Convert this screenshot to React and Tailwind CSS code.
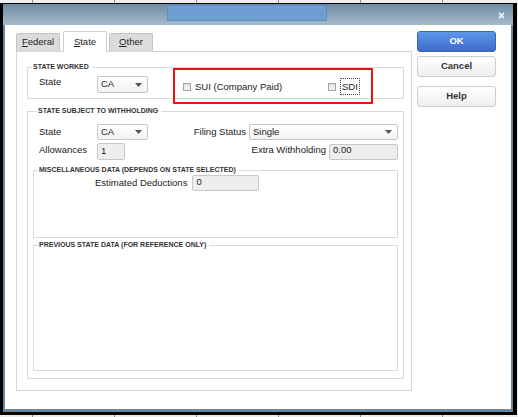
import clsx from "clsx";

const Arrow = () => (
  <svg width="7" height="4" viewBox="0 0 7 4">
    <path d="M0 0h7L3.5 4z" fill="#555" />
  </svg>
);

function Select({ value, className }) {
  return (
    <div
      className={clsx(
        "flex items-center justify-between rounded-[2px] border border-[#c6c6c6] bg-linear-to-b from-white to-[#f2f2f2] pl-[3px] pr-[5px] text-[#222]",
        className
      )}
    >
      <span>{value}</span>
      <Arrow />
    </div>
  );
}

function Field({ value, className }) {
  return (
    <div
      className={clsx(
        "flex items-end rounded-[2px] border border-[#c8c8c8] bg-[#eeeeee] pb-[1px] pl-[3px] text-[#222]",
        className
      )}
    >
      {value}
    </div>
  );
}

function Group({ title, className, children }) {
  return (
    <fieldset className={clsx("border border-[#d9d9d9]", className)}>
      <legend className="ml-[4px] px-[1px] pr-[3px] text-[7px] font-bold leading-[8px] text-[#333]">
        {title}
      </legend>
      {children}
    </fieldset>
  );
}

function CheckBox() {
  return (
    <span className="block h-[8px] w-[8px] border border-[#a3a3a3] bg-linear-to-b from-[#e4e4e4] to-[#f4f4f4]" />
  );
}

function Tab({ label, active }) {
  return (
    <div
      className={clsx(
        "flex w-[44px] items-center justify-center rounded-t-[2px] border border-b-0 text-[9.5px] text-[#222]",
        active
          ? "relative z-10 -mb-px h-[21px] w-[42px] border-[#cfcfcf] bg-white"
          : "h-[18px] border-[#c4c4c4] bg-[#dcdcdc]"
      )}
    >
      <span>
        <u>{label[0]}</u>
        {label.slice(1)}
      </span>
    </div>
  );
}

function Button({ children, primary, className }) {
  return (
    <div
      className={clsx(
        "flex h-[21px] items-center justify-center rounded-[3px] border text-[9.5px] font-bold",
        primary
          ? "border-[#3b64ae] bg-linear-to-b from-[#5d97e8] to-[#3c6ccc] text-white"
          : "border-[#cdcdcd] bg-linear-to-b from-white to-[#eeeeee] text-[#333]",
        className
      )}
    >
      {children}
    </div>
  );
}

function Ticks() {
  return (
    <div className="flex h-full gap-[81px] pl-[32px]">
      {[0, 1, 2, 3, 4, 5].map((i) => (
        <span key={i} className="block h-full w-px bg-[#8a8a8a]" />
      ))}
    </div>
  );
}

export default function App() {
  return (
    <div className="flex h-[417px] w-[518px] flex-col overflow-hidden bg-[#eeeeee] font-['Liberation_Sans',Arial,sans-serif]">
      <div className="h-[3px]">
        <Ticks />
      </div>

      {/* Dialog window */}
      <div className="h-[412px] w-[517px] border-t-[1px] border-r-[4px] border-b-[3px] border-l-[3px] border-black">
        <div className="flex h-full flex-col bg-[#6a879e] px-[2px] pb-[3px]">
          {/* Title bar */}
          <div className="-mx-[2px] flex h-[21px] items-start bg-linear-to-b from-[#6d8ba4] to-[#a6bbcb] pr-[8px]">
            <div className="ml-[164px] mt-[1px] h-[16px] w-[160px] border border-[#5d8cc0] bg-[#6f9fd2]" />
            <div className="flex-1" />
            <svg width="7" height="7" viewBox="0 0 7 7" className="mt-[8px]">
              <path d="M1 1l5 5M6 1L1 6" stroke="#e6ecf0" strokeWidth="1.8" />
            </svg>
          </div>

          {/* Body */}
          <div className="flex flex-1 bg-white pl-[11px] pt-[6px]">
            {/* Tabs column */}
            <div className="flex w-[396px] flex-col">
              <div className="flex h-[20px] items-end">
                <Tab label="Federal" />
                <div className="w-[3px]" />
                <Tab label="State" active />
                <div className="w-[2px]" />
                <Tab label="Other" />
              </div>

              <div className="h-[340px] border border-[#d6d6d6] pl-[10px] pr-[7px] pt-[11px] text-[9.5px] text-[#222]">
                {/* State worked */}
                <Group title="STATE WORKED" className="relative px-0 pb-[5px]">
                  <div className="flex h-[17px] items-start pl-[11px] pt-[5px] box-content">
                    <span className="w-[58px] leading-[12px]">State</span>
                    <Select value="CA" className="h-[17px] w-[51px]" />
                    <div className="ml-[35px] flex w-[145px] items-center pt-[5px]">
                      <CheckBox />
                      <span className="ml-[4px] leading-[11px]">SUI (Company Paid)</span>
                    </div>
                    <div className="flex items-center pt-[2px]">
                      <CheckBox />
                      <span className="ml-[4px] border border-dotted border-[#444] px-[1px] leading-[15px]">
                        SDI
                      </span>
                    </div>
                  </div>
                  <div className="absolute left-[145px] top-[-3px] h-[36px] w-[200px] border-2 border-[#ee1111]" />
                </Group>

                {/* State subject to withholding */}
                <Group title="STATE SUBJECT TO WITHHOLDING" className="mt-[8px] px-[5px] pb-[7px]">
                  <div className="mt-[9px] flex h-[16px] items-center">
                    <span className="ml-[6px] w-[58px]">State</span>
                    <Select value="CA" className="h-[16px] w-[51px]" />
                    <span className="flex-1 pr-[3px] text-right">Filing Status</span>
                    <Select value="Single" className="h-[16px] w-[149px]" />
                  </div>
                  <div className="mt-[3px] flex h-[17px] items-center">
                    <span className="ml-[6px] w-[58px] -mt-[2px]">Allowances</span>
                    <Field value="1" className="h-[17px] w-[28px]" />
                    <span className="flex-1 -mt-[3px] pr-[3px] text-right">Extra Withholding</span>
                    <Field value="0.00" className="h-[16px] w-[69px]" />
                  </div>

                  <Group
                    title="MISCELLANEOUS DATA (DEPENDS ON STATE SELECTED)"
                    className="mt-[6px] pb-[46px]"
                  >
                    <div className="mt-[1px] flex h-[16px] items-center gap-[5px] pl-[61px]">
                      <span>Estimated Deductions</span>
                      <Field value="0" className="h-[16px] w-[67px]" />
                    </div>
                  </Group>

                  <Group title="PREVIOUS STATE DATA (FOR REFERENCE ONLY)" className="mt-[3px]">
                    <div className="h-[121px]" />
                  </Group>
                </Group>
              </div>
            </div>

            {/* Buttons */}
            <div className="ml-[5px] flex w-[79px] flex-col">
              <Button primary>OK</Button>
              <Button className="mt-[4px]">Cancel</Button>
              <Button className="mt-[9px]">Help</Button>
            </div>
          </div>
        </div>
      </div>

      <div className="h-[2px]">
        <Ticks />
      </div>
    </div>
  );
}
